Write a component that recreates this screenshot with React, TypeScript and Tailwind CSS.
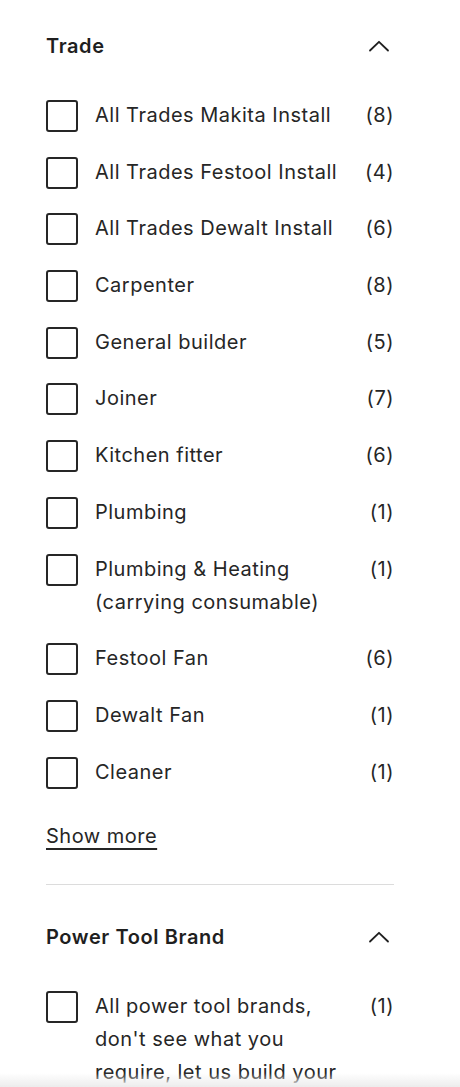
import React from "react";

type Option = { label: string; count: number };

const trades: Option[] = [
  { label: "All Trades Makita Install", count: 8 },
  { label: "All Trades Festool Install", count: 4 },
  { label: "All Trades Dewalt Install", count: 6 },
  { label: "Carpenter", count: 8 },
  { label: "General builder", count: 5 },
  { label: "Joiner", count: 7 },
  { label: "Kitchen fitter", count: 6 },
  { label: "Plumbing", count: 1 },
  { label: "Plumbing & Heating (carrying consumable)", count: 1 },
  { label: "Festool Fan", count: 6 },
  { label: "Dewalt Fan", count: 1 },
  { label: "Cleaner", count: 1 },
];

const brands: Option[] = [
  {
    label:
      "All power tool brands, don't see what you require, let us build your kit for you",
    count: 1,
  },
];

const Chevron = () => (
  <svg
    width="22"
    height="12"
    viewBox="0 0 22 12"
    fill="none"
    stroke="#1f1f1f"
    strokeWidth={1.8}
    strokeLinecap="round"
    strokeLinejoin="round"
  >
    <path d="M2 10.5L11 1.8L20 10.5" />
  </svg>
);

const FilterRow = ({ option }: { option: Option }) => {
  const [checked, setChecked] = React.useState(false);
  return (
    <label className="flex items-start justify-between cursor-pointer">
      <span
        onClick={() => setChecked(!checked)}
        className={`mt-[1px] w-[32px] h-[32px] shrink-0 rounded-[3px] border-[2.5px] border-[#262626] ${checked ? "bg-[#262626]" : "bg-white"}`}
      />
      <span className="ml-[17px] w-[250px] mr-auto text-[20px] leading-[33px] tracking-[0.025em] text-[#262626]">
        {option.label}
      </span>
      <span className="text-[20px] leading-[33px] tracking-[0.025em] text-[#262626]">
        ({option.count})
      </span>
    </label>
  );
};

const FilterGroup = ({
  title,
  options,
  showMore,
}: {
  title: string;
  options: Option[];
  showMore?: boolean;
}) => (
  <section>
    <div className="flex items-center justify-between h-[28px]">
      <h3 className="text-[20px] font-semibold tracking-[0.03em] text-[#1f1f1f] leading-[28px]">
        {title}
      </h3>
      <span className="mr-[4px]">
        <Chevron />
      </span>
    </div>
    <div className="mt-[39px] flex flex-col gap-[23.7px]">
      {options.map((o) => (
        <FilterRow key={o.label} option={o} />
      ))}
    </div>
    {showMore && (
      <button className="mt-[31px] block text-[20px] leading-[33px] tracking-[0.025em] text-[#262626] underline underline-offset-[5px] decoration-[1.5px]">
        Show more
      </button>
    )}
  </section>
);

export default function App() {
  return (
    <div
      className="min-h-screen bg-white"
      style={{ fontFamily: "Inter, 'Noto Sans', Arial, sans-serif" }}
    >
      <div className="ml-[46px] w-[348px] pt-[32px]">
        <FilterGroup title="Trade" options={trades} showMore />
        <div className="mt-[31px] mb-[38px] h-px bg-[#dcdcdc]" />
        <FilterGroup title="Power Tool Brand" options={brands} />
      </div>
      <div className="fixed bottom-0 left-0 right-0 h-[14px] bg-gradient-to-b from-transparent to-[#ececec] pointer-events-none" />
    </div>
  );
}
